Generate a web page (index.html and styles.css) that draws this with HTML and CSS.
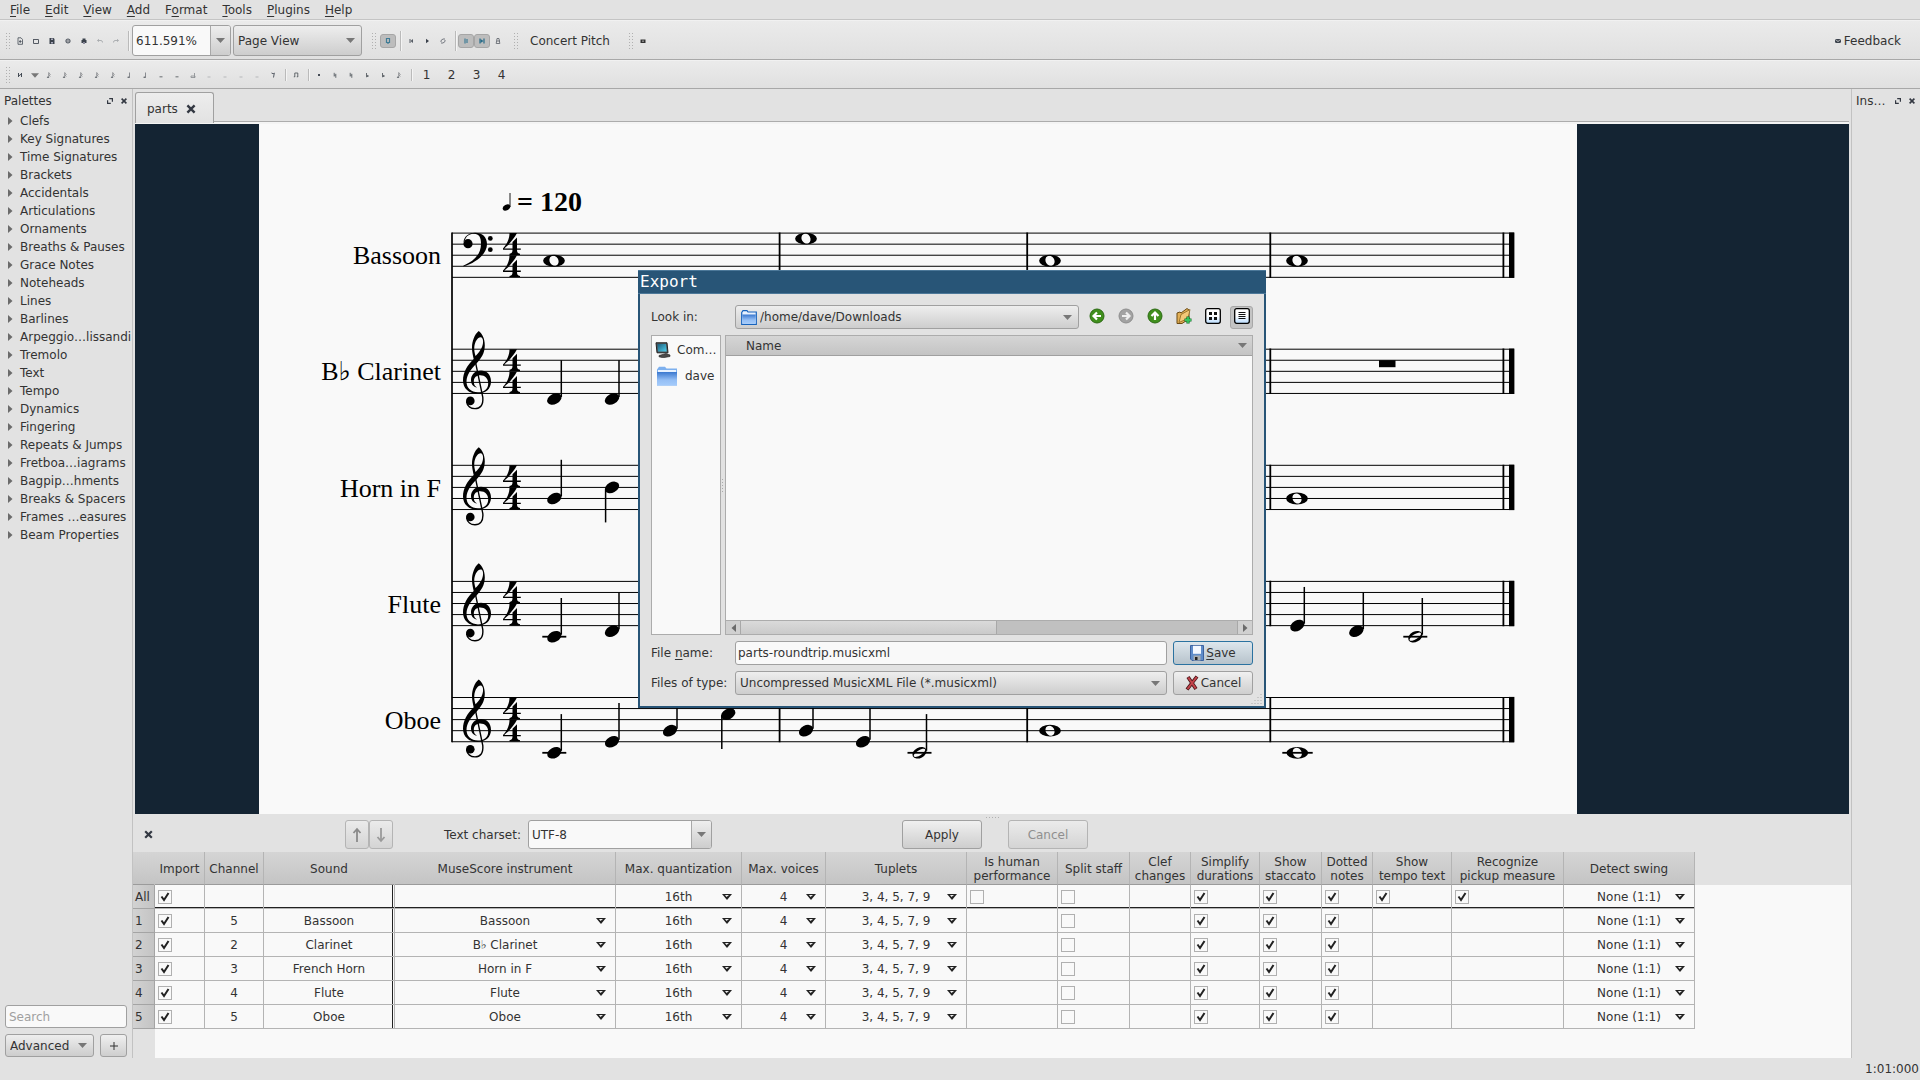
FILE: index.html
```html
<!DOCTYPE html>
<html lang="en">
<head>
<meta charset="utf-8">
<title>parts</title>
<link rel="stylesheet" href="styles.css">
</head>
<body>
<svg class="defs" aria-hidden="true">
  <defs>
    <symbol id="i-new" viewBox="0 0 8 8"><path d="M2 .8h3l1.5 1.7v4.8H2zM4.2 3v3M3 4.5h2.6" fill="none" stroke="#444b55" stroke-width=".8"/></symbol>
    <symbol id="i-open" viewBox="0 0 8 8"><path d="M1.5 2v4.5h5V2.5h-5" fill="none" stroke="#555b64"/></symbol>
    <symbol id="i-save" viewBox="0 0 8 8"><path d="M1.5 1h4l1 1v5h-5z" fill="#3b424c"/><path d="M3 1.5h2v1.5H3zM3 5h2v1.5H3z" fill="#aab"/></symbol>
    <symbol id="i-cloud" viewBox="0 0 8 8"><circle cx="4" cy="4" r="2" fill="none" stroke="#555b64" stroke-width="1.2"/><path d="M4 2.5V5" stroke="#555b64"/></symbol>
    <symbol id="i-print" viewBox="0 0 8 8"><path d="M2.5 1.5h3V3h1v3h-5V3h1z" fill="#3b424c"/><path d="M3 5h2v2H3z" fill="#889"/></symbol>
    <symbol id="i-undo" viewBox="0 0 8 8"><path d="M1.5 3.5h3.5q1.5 0 1.5 2M3 2.2 1.6 3.5 3 4.7" fill="none" stroke="#a5a8ac" stroke-width=".9"/></symbol>
    <symbol id="i-redo" viewBox="0 0 8 8"><path d="M6.5 3.5H3q-1.5 0-1.5 2M5 2.2 6.4 3.5 5 4.7" fill="none" stroke="#a5a8ac" stroke-width=".9"/></symbol>
    <symbol id="i-midi" viewBox="0 0 8 8"><path d="M2.5 1.500h3v4h-3zM4 5.500v1.500" fill="none" stroke="#3f7c96" stroke-width="1.200"/></symbol>
    <symbol id="i-rewind" viewBox="0 0 8 8"><path d="M2.500 2h1v4h-1zM6 2v4L3.500 4z" fill="#555b64"/></symbol>
    <symbol id="i-play" viewBox="0 0 8 8"><path d="M3 1.800 6 4 3 6.200z" fill="#3b424c"/></symbol>
    <symbol id="i-loop" viewBox="0 0 8 8"><path d="M2 5V3.500l2-1.500h2M6 3v1.500L4 6H2" fill="none" stroke="#666b74" stroke-width=".9"/></symbol>
    <symbol id="i-repeat" viewBox="0 0 8 8"><path d="M3 1.500v5M5 2v4" stroke="#3f7c96" stroke-width="1.200"/></symbol>
    <symbol id="i-pan" viewBox="0 0 8 8"><path d="M2 1.500v5M6 1.500v5" stroke="#276b88" stroke-width="1.200"/><path d="M2.500 2 5.500 4l-3 2z" fill="#276b88"/></symbol>
    <symbol id="i-metro" viewBox="0 0 8 8"><path d="M3 1.500h2l.8 5H2.200zM3 4h3" fill="none" stroke="#666b73" stroke-width=".9"/></symbol>
    <symbol id="i-camera" viewBox="0 0 8 8"><path d="M1.500 2.500h5v3.500h-5z" fill="#333"/><circle cx="4" cy="4.200" r=".9" fill="#999"/></symbol>
    <symbol id="i-mail" viewBox="0 0 8 8"><rect x="1" y="2" width="6" height="4" rx="1.500" fill="#3b424c"/><path d="m2.200 3.200 1.800 1.300 1.800-1.300" fill="none" stroke="#ddd" stroke-width=".8"/></symbol>
    <symbol id="i-input" viewBox="0 0 8 8"><path d="M2.500 6V2M5.500 6V2M2 5.500l4-3" stroke="#444b55" fill="none"/></symbol>
    <symbol id="i-flag" viewBox="0 0 8 8"><path d="M3.700 6.500v-5l1.800 2.500M3.700 3.500 5.300 5.500" fill="none" stroke="#85888c" stroke-width=".8"/><ellipse cx="3" cy="6.200" rx="1.200" ry=".8" fill="#666b70"/></symbol>
    <symbol id="i-quarter" viewBox="0 0 8 8"><path d="M4.500 6.500v-5" stroke="#888b90"/><ellipse cx="3.600" cy="6.200" rx="1.300" ry=".8" fill="#666b70"/></symbol>
    <symbol id="i-low" viewBox="0 0 8 8"><rect x="2.500" y="5" width="3" height="1.500" fill="#909396"/></symbol>
    <symbol id="i-long" viewBox="0 0 8 8"><path d="M2 5h4v1.500H2zM5.500 2v5" fill="none" stroke="#909396" stroke-width=".9"/></symbol>
    <symbol id="i-faint" viewBox="0 0 8 8"><rect x="2.500" y="5.500" width="3" height="1" fill="#b6b8ba"/></symbol>
    <symbol id="i-rest" viewBox="0 0 8 8"><path d="M2.500 2q2 1.500 2.800 0L4.500 6.500" fill="none" stroke="#555b64"/></symbol>
    <symbol id="i-tie" viewBox="0 0 8 8"><path d="M2.800 6V2h3M5.800 6V2M1.800 5.800h1M4.800 5.800h1" fill="none" stroke="#555b60" stroke-width=".9"/></symbol>
    <symbol id="i-dot" viewBox="0 0 8 8"><rect x="3" y="3" width="2" height="2" fill="#444b55"/></symbol>
    <symbol id="i-acc" viewBox="0 0 8 8"><path d="M3.200 1.800V5.500M4.800 2.800v4M3.200 4.200h1.600" fill="none" stroke="#666b70"/></symbol>
    <symbol id="i-flat" viewBox="0 0 8 8"><path d="M3.500 2v4L5.500 5 3.700 4" fill="none" stroke="#666b70"/></symbol>
    <symbol id="i-float" viewBox="0 0 10 10"><path d="M4 2h4v4M6 8H2V4" fill="none" stroke="#333842" stroke-width="1.500"/></symbol>
    <symbol id="i-x" viewBox="0 0 10 10"><path d="m2 2 6 6m0-6-6 6" stroke="#333842" stroke-width="2"/></symbol>
    <symbol id="i-down" viewBox="0 0 9 5"><path d="M0 0h9L4.500 5z" fill="#777"/></symbol>
    <symbol id="i-right" viewBox="0 0 5 8"><path d="M0 0v8l4.500-4z" fill="#6b6b6b"/></symbol>
    <symbol id="i-folder" viewBox="0 0 22 20">
      <path d="M1 3.500 3 .8h6l1.500 1.700H21v17H1z" fill="#7db0ee"/><path d="M2 4h18v2H2z" fill="#e8f2ff"/><path d="M1 6h20v13.500H1z" fill="url(#g-folder)"/>
    </symbol>
    <symbol id="i-folder-open" viewBox="0 0 16 15">
      <path d="M.7 2.500 2 .7h4l1 1.300h8.300v12.300H.7z" fill="#e8f2ff" stroke="#1763bd" stroke-width="1.200"/><path d="M1.300 4.500h13.400v9.200H1.300z" fill="url(#g-folder)"/>
    </symbol>
    <linearGradient id="g-folder" x2="0" y2="1"><stop offset="0" stop-color="#3a78cf"/><stop offset=".6" stop-color="#95bff5"/><stop offset="1" stop-color="#a4cbfb"/></linearGradient>
    <linearGradient id="g-screen" x2="1" y2="1"><stop offset="0" stop-color="#1d5d7a"/><stop offset="1" stop-color="#4fd0ee"/></linearGradient>
    <linearGradient id="g-page" x2="0" y2="1"><stop offset=".5" stop-color="#fff"/><stop offset="1" stop-color="#b9dcff"/></linearGradient>
    <g id="treble">
      <path fill-rule="evenodd" d="M15.700-51.300C11.500-48 9-41 9-35c0 5 1 8 1.700 11.500C4-17 0-10 0-2 0 6 6 11.200 14.500 11.200 22.500 11.200 28 6.500 28-1c0-7-4.500-10.800-10-10.800C12-11.800 8-7.500 8-2.500 8 2 10.500 4.500 14 5c-2.500-1.500-3.200-3.500-3.200-6 0-4 2.700-6.200 6.500-6.200C22-7.200 25.200-4 25.200 1c0 5.500-4.200 8.800-10.200 8.800C8 9.800 3.500 5.500 3.500-1c0-6.500 4.500-12.500 9.500-17.500C18-24 21.800-29 21.800-37c0-7-2.800-12-6.100-14.300zM18.500-45c1.500 1 1.700 3 1.500 5.500-.5 5-4 9.500-7.500 13-1-3.500-1.500-6.500-1.200-9C12-41 15-46 18.500-45z"/>
      <path d="M11.500-25l8.300 40C20.500 23 17 26.200 12 26.200 8 26.200 4 24 3.600 19" fill="none" stroke="#000" stroke-width="1.400"/>
      <circle cx="7.300" cy="18.500" r="4.300"/>
    </g>
    <g id="bass">
      <path d="M.5-2C1-8 6-11.400 12-11.400 19.500-11.400 24-7 24 0 24 9 14 18.500.3 22.300v-.8C11 17 18 10 18-.5 18-7 16-10.400 11-10.400 6.500-10.400 3-8 2-4z"/>
      <circle cx="5" cy="-.5" r="4.600"/><circle cx="27.300" cy="-5.700" r="2.400"/><circle cx="27.300" cy="5.500" r="2.400"/>
    </g>
    <path id="four" d="M6.500 0H14C11 6 5 12.500 1.300 15.300H9.500V9L14 4.500v10.800h3.800v1.300H14c0 2.400.5 3.700 3 4v1.200H6.500v-1.200c2.500-.3 3-1.600 3-4H0v-1.300C4 11 6.500 6 6.500 0z"/>
    <g id="time"><use href="#four"/><use href="#four" y="22.200"/></g>
    <g id="staff">
      <path d="M452 0H1514M452 11.060H1514M452 22.120H1514M452 33.180H1514M452 44.240H1514" stroke="#000"/>
      <path d="M779.600-.6V44.800M1027.200-.6V44.800M1270.300-.6V44.800M1503.400-.6V44.800" stroke="#000" stroke-width="1.800"/>
      <path d="M1509-.6h5.400V44.800H1509z"/><use href="#time" x="503"/>
    </g>
    <ellipse id="head" rx="7.600" ry="5.200" transform="rotate(-28)"/>
    <g id="up"><use href="#head"/><path d="M7-38.700V-2" stroke="#000" stroke-width="1.500"/></g>
    <g id="dn"><use href="#head"/><path d="M-6.400 2V35" stroke="#000" stroke-width="1.500"/></g>
    <path id="whole" fill-rule="evenodd" d="M-10.900 0a10.900 5.900 0 1 0 21.800 0a10.900 5.900 0 1 0-21.800 0zM2.600 4.500A5.200 4.200 60 1 0-2.600-4.500A5.200 4.200 60 1 0 2.600 4.500z"/>
    <g id="half"><path fill-rule="evenodd" d="M6.710-3.570A7.600 5.200-28 1 0-6.710 3.570A7.600 5.200-28 1 0 6.710-3.570zM5.600-3.500A6.600 2.500-32 1 1-5.600 3.500A6.600 2.500-32 1 1 5.600-3.500z"/><path d="M7-38.700V-2" stroke="#000" stroke-width="1.500"/></g>
    <path id="ledger" d="M-12 0h24" stroke="#000" stroke-width="1.800"/>
  </defs>
</svg>

<nav class="menubar">
  <button><u>F</u>ile</button><button><u>E</u>dit</button><button><u>V</u>iew</button><button><u>A</u>dd</button><button>F<u>o</u>rmat</button><button><u>T</u>ools</button><button><u>P</u>lugins</button><button><u>H</u>elp</button>
</nav>

<div class="toolbar main-tools">
  <span class="grip"></span>
  <button class="tool" aria-label="New"><svg><use href="#i-new"/></svg></button><button class="tool" aria-label="Open"><svg><use href="#i-open"/></svg></button><button class="tool" aria-label="Save score"><svg><use href="#i-save"/></svg></button><button class="tool" aria-label="Save online"><svg><use href="#i-cloud"/></svg></button><button class="tool" aria-label="Print"><svg><use href="#i-print"/></svg></button><button class="tool" aria-label="Undo"><svg><use href="#i-undo"/></svg></button><button class="tool" aria-label="Redo"><svg><use href="#i-redo"/></svg></button>
  <span class="sep"></span>
  <div class="combo zoom"><input value="611.591%" aria-label="Zoom"><button aria-label="Zoom list"><svg class="down"><use href="#i-down"/></svg></button></div>
  <select class="field view" aria-label="View mode"><option>Page View</option></select>
  <span class="grip second"></span>
  <button class="tool on" aria-label="MIDI input"><svg><use href="#i-midi"/></svg></button>
  <span class="sep"></span>
  <button class="tool" aria-label="Rewind"><svg><use href="#i-rewind"/></svg></button><button class="tool" aria-label="Play"><svg><use href="#i-play"/></svg></button><button class="tool" aria-label="Loop"><svg><use href="#i-loop"/></svg></button>
  <span class="sep"></span>
  <button class="tool on" aria-label="Play repeats"><svg><use href="#i-repeat"/></svg></button><button class="tool on" aria-label="Pan score"><svg><use href="#i-pan"/></svg></button><button class="tool" aria-label="Metronome"><svg><use href="#i-metro"/></svg></button>
  <span class="grip third"></span>
  <button class="pitch">Concert Pitch</button>
  <span class="grip"></span>
  <button class="tool" aria-label="Image capture"><svg><use href="#i-camera"/></svg></button>
  <button class="feedback"><svg><use href="#i-mail"/></svg>Feedback</button>
</div>

<div class="toolbar note-tools">
  <span class="grip"></span>
  <button class="tool" aria-label="Note input"><svg><use href="#i-input"/></svg></button><button class="tool narrow" aria-label="Input modes"><svg class="down"><use href="#i-down"/></svg></button><button class="tool" aria-label="128th"><svg><use href="#i-flag"/></svg></button><button class="tool" aria-label="64th"><svg><use href="#i-flag"/></svg></button><button class="tool" aria-label="32nd"><svg><use href="#i-flag"/></svg></button><button class="tool" aria-label="16th"><svg><use href="#i-flag"/></svg></button><button class="tool" aria-label="Eighth"><svg><use href="#i-flag"/></svg></button><button class="tool" aria-label="Quarter"><svg><use href="#i-quarter"/></svg></button><button class="tool" aria-label="Half"><svg><use href="#i-quarter"/></svg></button><button class="tool" aria-label="Whole"><svg><use href="#i-low"/></svg></button><button class="tool" aria-label="Double whole"><svg><use href="#i-low"/></svg></button><button class="tool" aria-label="Longa"><svg><use href="#i-long"/></svg></button><button class="tool" aria-label="Dot"><svg><use href="#i-faint"/></svg></button><button class="tool" aria-label="Double dot"><svg><use href="#i-faint"/></svg></button><button class="tool" aria-label="Triple dot"><svg><use href="#i-faint"/></svg></button><button class="tool" aria-label="Tie"><svg><use href="#i-faint"/></svg></button><button class="tool" aria-label="Rest"><svg><use href="#i-rest"/></svg></button>
  <span class="sep"></span>
  <button class="tool" aria-label="Flip"><svg><use href="#i-tie"/></svg></button>
  <span class="sep"></span>
  <button class="tool" aria-label="Accent"><svg><use href="#i-dot"/></svg></button><button class="tool" aria-label="Sharp"><svg><use href="#i-acc"/></svg></button><button class="tool" aria-label="Natural"><svg><use href="#i-acc"/></svg></button><button class="tool" aria-label="Flat"><svg><use href="#i-flat"/></svg></button><button class="tool" aria-label="Double flat"><svg><use href="#i-flat"/></svg></button><button class="tool" aria-label="Grace"><svg><use href="#i-flag"/></svg></button>
  <span class="sep"></span>
  <button class="voice">1</button><button class="voice">2</button><button class="voice">3</button><button class="voice">4</button>
</div>

<main class="workspace">
  <aside class="palettes">
    <header class="dock-title"><span>Palettes</span><button aria-label="Float"><svg><use href="#i-float"/></svg></button><button aria-label="Close"><svg><use href="#i-x"/></svg></button></header>
    <ul>
      <li><svg><use href="#i-right"/></svg>Clefs</li>
      <li><svg><use href="#i-right"/></svg>Key Signatures</li>
      <li><svg><use href="#i-right"/></svg>Time Signatures</li>
      <li><svg><use href="#i-right"/></svg>Brackets</li>
      <li><svg><use href="#i-right"/></svg>Accidentals</li>
      <li><svg><use href="#i-right"/></svg>Articulations</li>
      <li><svg><use href="#i-right"/></svg>Ornaments</li>
      <li><svg><use href="#i-right"/></svg>Breaths &amp; Pauses</li>
      <li><svg><use href="#i-right"/></svg>Grace Notes</li>
      <li><svg><use href="#i-right"/></svg>Noteheads</li>
      <li><svg><use href="#i-right"/></svg>Lines</li>
      <li><svg><use href="#i-right"/></svg>Barlines</li>
      <li><svg><use href="#i-right"/></svg>Arpeggio…lissandi</li>
      <li><svg><use href="#i-right"/></svg>Tremolo</li>
      <li><svg><use href="#i-right"/></svg>Text</li>
      <li><svg><use href="#i-right"/></svg>Tempo</li>
      <li><svg><use href="#i-right"/></svg>Dynamics</li>
      <li><svg><use href="#i-right"/></svg>Fingering</li>
      <li><svg><use href="#i-right"/></svg>Repeats &amp; Jumps</li>
      <li><svg><use href="#i-right"/></svg>Fretboa…iagrams</li>
      <li><svg><use href="#i-right"/></svg>Bagpip…hments</li>
      <li><svg><use href="#i-right"/></svg>Breaks &amp; Spacers</li>
      <li><svg><use href="#i-right"/></svg>Frames …easures</li>
      <li><svg><use href="#i-right"/></svg>Beam Properties</li>
    </ul>
    <div class="palette-foot">
      <input class="field" type="text" placeholder="Search" aria-label="Search palettes">
      <div class="foot-row"><select class="field" aria-label="Workspace"><option>Advanced</option></select><button class="btn" aria-label="Add workspace"><svg viewBox="0 0 10 10"><path d="M5 1v8M1 5h8" stroke="#333"/></svg></button></div>
    </div>
  </aside>

  <section class="center">
    <div class="tabs"><div class="tab"><span>parts</span><button aria-label="Close tab"><svg><use href="#i-x"/></svg></button></div></div>
    <div class="canvas">
      <svg class="score" viewBox="259 124 1318 690" preserveAspectRatio="xMinYMin slice">
        <rect x="259" y="124" width="1318" height="690" fill="#f9f9f9"/>
        <path d="M452 232.500V742.300" stroke="#000" stroke-width="1.700"/>
        <g class="label">
          <text x="441" y="264">Bassoon</text><text x="441" y="380">B<tspan class="flat">♭</tspan> Clarinet</text><text x="441" y="497">Horn in F</text><text x="441" y="613">Flute</text><text x="441" y="729">Oboe</text>
        </g>
        <ellipse cx="506.500" cy="207.500" rx="4" ry="2.700" transform="rotate(-28 506.500 207.500)"/><path d="M510 193v14" stroke="#000" stroke-width=".9"/>
        <text class="tempo" x="517" y="211">= 120</text>
        <g transform="translate(0 233.100)">
          <use href="#staff"/><use href="#bass" x="463" y="11.060"/>
          <use href="#whole" x="554" y="27.650"/><use href="#whole" x="806" y="5.530"/><use href="#whole" x="1050" y="27.650"/><use href="#whole" x="1297" y="27.650"/>
        </g>
        <g transform="translate(0 349.200)">
          <use href="#staff"/><use href="#treble" x="463" y="33.180"/>
          <use href="#up" x="554.300" y="49.770"/><use href="#up" x="612" y="49.770"/><path d="M1379 11h16.500v7H1379z"/>
        </g>
        <g transform="translate(0 465.300)">
          <use href="#staff"/><use href="#treble" x="463" y="33.180"/>
          <use href="#up" x="554.300" y="33.180"/><use href="#dn" x="612" y="22.120"/><use href="#whole" x="1297" y="33.180"/>
        </g>
        <g transform="translate(0 581.400)">
          <use href="#staff"/><use href="#treble" x="463" y="33.180"/>
          <use href="#up" x="554.300" y="55.300"/><use href="#ledger" x="554.300" y="55.300"/><use href="#up" x="612" y="49.770"/>
          <use href="#up" x="1297.300" y="44.240"/><use href="#up" x="1356.300" y="49.770"/><use href="#half" x="1415.300" y="55.300"/><use href="#ledger" x="1415.300" y="55.300"/>
        </g>
        <g transform="translate(0 697.500)">
          <use href="#staff"/><use href="#treble" x="463" y="33.180"/>
          <use href="#up" x="554.300" y="55.300"/><use href="#ledger" x="554.300" y="55.300"/><use href="#up" x="612" y="44.240"/><use href="#up" x="670" y="33.180"/><use href="#dn" x="728.200" y="16.590"/>
          <use href="#up" x="806" y="33.180"/><use href="#up" x="863" y="44.240"/><use href="#half" x="919.500" y="55.300"/><use href="#ledger" x="919.500" y="55.300"/>
          <use href="#whole" x="1050" y="33.180"/><use href="#whole" x="1297.300" y="55.300"/><path d="M1282.300 55.300h30.400" stroke="#000" stroke-width="1.800"/>
        </g>
      </svg>
    </div>

    <section class="import">
      <span class="handle"></span>
      <div class="import-tools">
        <button class="plain" aria-label="Close panel"><svg><use href="#i-x"/></svg></button>
        <div class="movers"><button class="btn" disabled aria-label="Move up"><svg viewBox="0 0 10 16"><path d="M5 15V2M1.500 6 5 2l3.500 4" fill="none" stroke="#8a8a8a" stroke-width="1.800"/></svg></button><button class="btn" disabled aria-label="Move down"><svg viewBox="0 0 10 16"><path d="M5 1v13M1.500 10 5 14l3.500-4" fill="none" stroke="#9a9a9a" stroke-width="1.800"/></svg></button></div>
        <label for="charset">Text charset:</label>
        <div class="combo charset"><input id="charset" value="UTF-8"><button aria-label="Charset list"><svg class="down"><use href="#i-down"/></svg></button></div>
        <button class="btn wide apply">Apply</button>
        <button class="btn wide" disabled>Cancel</button>
      </div>
      <div class="tracks">
        <table>
          <colgroup><col class="w22"><col class="w50"><col class="w59"><col class="w131"><col class="w221"><col class="w126"><col class="w84"><col class="w141"><col class="w91"><col class="w72"><col class="w61"><col class="w69"><col class="w62"><col class="w51"><col class="w79"><col class="w112"><col class="w131"></colgroup>
          <thead><tr><th></th><th>Import</th><th>Channel</th><th>Sound</th><th>MuseScore instrument</th><th>Max. quantization</th><th>Max. voices</th><th>Tuplets</th><th>Is human<br>performance</th><th>Split staff</th><th>Clef<br>changes</th><th>Simplify<br>durations</th><th>Show<br>staccato</th><th>Dotted<br>notes</th><th>Show<br>tempo text</th><th>Recognize<br>pickup measure</th><th>Detect swing</th></tr></thead>
          <tbody>
            <tr class="all"><th>All</th><td><input type="checkbox" checked aria-label="Import all"></td><td></td><td class="sound"></td><td></td><td><select aria-label="Max. quantization"><option>16th</option></select></td><td><select aria-label="Max. voices"><option>4</option></select></td><td><select aria-label="Tuplets"><option>3, 4, 5, 7, 9</option></select></td><td><input type="checkbox" aria-label="Is human performance"></td><td><input type="checkbox" aria-label="Split staff"></td><td></td><td><input type="checkbox" checked aria-label="Simplify durations"></td><td><input type="checkbox" checked aria-label="Show staccato"></td><td><input type="checkbox" checked aria-label="Dotted notes"></td><td><input type="checkbox" checked aria-label="Show tempo text"></td><td><input type="checkbox" checked aria-label="Recognize pickup measure"></td><td><select aria-label="Detect swing"><option>None (1:1)</option></select></td></tr>
            <tr><th>1</th><td><input type="checkbox" checked aria-label="Import"></td><td>5</td><td class="sound">Bassoon</td><td><select aria-label="Instrument"><option>Bassoon</option></select></td><td><select aria-label="Max. quantization"><option>16th</option></select></td><td><select aria-label="Max. voices"><option>4</option></select></td><td><select aria-label="Tuplets"><option>3, 4, 5, 7, 9</option></select></td><td></td><td><input type="checkbox" aria-label="Split staff"></td><td></td><td><input type="checkbox" checked aria-label="Simplify durations"></td><td><input type="checkbox" checked aria-label="Show staccato"></td><td><input type="checkbox" checked aria-label="Dotted notes"></td><td></td><td></td><td><select aria-label="Detect swing"><option>None (1:1)</option></select></td></tr>
            <tr><th>2</th><td><input type="checkbox" checked aria-label="Import"></td><td>2</td><td class="sound">Clarinet</td><td><select aria-label="Instrument"><option>B♭ Clarinet</option></select></td><td><select aria-label="Max. quantization"><option>16th</option></select></td><td><select aria-label="Max. voices"><option>4</option></select></td><td><select aria-label="Tuplets"><option>3, 4, 5, 7, 9</option></select></td><td></td><td><input type="checkbox" aria-label="Split staff"></td><td></td><td><input type="checkbox" checked aria-label="Simplify durations"></td><td><input type="checkbox" checked aria-label="Show staccato"></td><td><input type="checkbox" checked aria-label="Dotted notes"></td><td></td><td></td><td><select aria-label="Detect swing"><option>None (1:1)</option></select></td></tr>
            <tr><th>3</th><td><input type="checkbox" checked aria-label="Import"></td><td>3</td><td class="sound">French Horn</td><td><select aria-label="Instrument"><option>Horn in F</option></select></td><td><select aria-label="Max. quantization"><option>16th</option></select></td><td><select aria-label="Max. voices"><option>4</option></select></td><td><select aria-label="Tuplets"><option>3, 4, 5, 7, 9</option></select></td><td></td><td><input type="checkbox" aria-label="Split staff"></td><td></td><td><input type="checkbox" checked aria-label="Simplify durations"></td><td><input type="checkbox" checked aria-label="Show staccato"></td><td><input type="checkbox" checked aria-label="Dotted notes"></td><td></td><td></td><td><select aria-label="Detect swing"><option>None (1:1)</option></select></td></tr>
            <tr><th>4</th><td><input type="checkbox" checked aria-label="Import"></td><td>4</td><td class="sound">Flute</td><td><select aria-label="Instrument"><option>Flute</option></select></td><td><select aria-label="Max. quantization"><option>16th</option></select></td><td><select aria-label="Max. voices"><option>4</option></select></td><td><select aria-label="Tuplets"><option>3, 4, 5, 7, 9</option></select></td><td></td><td><input type="checkbox" aria-label="Split staff"></td><td></td><td><input type="checkbox" checked aria-label="Simplify durations"></td><td><input type="checkbox" checked aria-label="Show staccato"></td><td><input type="checkbox" checked aria-label="Dotted notes"></td><td></td><td></td><td><select aria-label="Detect swing"><option>None (1:1)</option></select></td></tr>
            <tr><th>5</th><td><input type="checkbox" checked aria-label="Import"></td><td>5</td><td class="sound">Oboe</td><td><select aria-label="Instrument"><option>Oboe</option></select></td><td><select aria-label="Max. quantization"><option>16th</option></select></td><td><select aria-label="Max. voices"><option>4</option></select></td><td><select aria-label="Tuplets"><option>3, 4, 5, 7, 9</option></select></td><td></td><td><input type="checkbox" aria-label="Split staff"></td><td></td><td><input type="checkbox" checked aria-label="Simplify durations"></td><td><input type="checkbox" checked aria-label="Show staccato"></td><td><input type="checkbox" checked aria-label="Dotted notes"></td><td></td><td></td><td><select aria-label="Detect swing"><option>None (1:1)</option></select></td></tr>
          </tbody>
        </table>
      </div>
    </section>
  </section>

  <aside class="inspector">
    <header class="dock-title"><span>Ins…</span><button aria-label="Float"><svg><use href="#i-float"/></svg></button><button aria-label="Close"><svg><use href="#i-x"/></svg></button></header>
  </aside>
</main>

<footer class="status">1:01:000</footer>

<div class="dialog" role="dialog" aria-label="Export">
  <div class="titlebar">Export</div>
  <form class="dialog-body">
    <div class="row">
      <label for="look">Look in:</label>
      <div class="lookin"><svg><use href="#i-folder-open"/></svg><select class="field" id="look"><option>/home/dave/Downloads</option></select></div>
      <button type="button" class="nav" aria-label="Back"><svg viewBox="0 0 16 16"><circle cx="8" cy="8" r="7" fill="#3f8f1c" stroke="#2b6a12"/><path d="M12 8H5M8 4.500 4.500 8 8 11.500" fill="none" stroke="#fff" stroke-width="2.200"/></svg></button>
      <button type="button" class="nav" aria-label="Forward"><svg viewBox="0 0 16 16"><circle cx="8" cy="8" r="7" fill="#a2a2a2" stroke="#8e8e8e"/><path d="M4 8h7M8 4.500 11.500 8 8 11.500" fill="none" stroke="#eee" stroke-width="2.200"/></svg></button>
      <button type="button" class="nav" aria-label="Parent folder"><svg viewBox="0 0 16 16"><circle cx="8" cy="8" r="7" fill="#3f8f1c" stroke="#2b6a12"/><path d="M8 12V5M4.500 8 8 4.500 11.500 8" fill="none" stroke="#fff" stroke-width="2.200"/></svg></button>
      <button type="button" class="nav" aria-label="New folder"><svg viewBox="0 0 16 16"><path d="m1 5 3-1 1 1 6-4.500 2 1.500v9l-7 4.500H1z" fill="#e3b057" stroke="#6b4a14"/><path d="m3 14.500 2-8 9-5-2 9z" fill="#f3c878" stroke="#8a6420" stroke-width=".8"/><path d="M12 8.500v7M8.500 12h7" stroke="#156b2a" stroke-width="3.200"/><path d="M12 9v6M9 12h6" stroke="#35c55c" stroke-width="1.800"/></svg></button>
      <button type="button" class="nav" aria-label="Icon view"><svg viewBox="0 0 16 16"><rect x=".7" y=".7" width="14.600" height="14.600" rx="2" fill="url(#g-page)" stroke="#000" stroke-width="1.300"/><path d="M4 4h3v3H4zM9 4h3v3H9zM4 9h3v3H4zM9 9h3v3H9z" fill="#111"/></svg></button>
      <button type="button" class="nav on" aria-label="Detail view"><svg viewBox="0 0 16 16"><rect x=".7" y=".7" width="14.600" height="14.600" rx="2" fill="url(#g-page)" stroke="#000" stroke-width="1.300"/><path d="M4.500 4.500h7M4.500 6.500h7M4.500 8.500h7M4.500 10.500h7" stroke="#111"/></svg></button>
    </div>
    <div class="panes">
      <ul class="places">
        <li class="computer"><svg viewBox="0 0 16 16"><path d="M1 .8h11l1 10H2z" fill="#50565a" stroke="#222"/><path d="M2.500 2h8.500l.7 7.500H3z" fill="url(#g-screen)"/><path d="M4 13.500 11 11.500l4 1.500v1.500l-7 1.300-4-1z" fill="#4a4a4a" stroke="#222" stroke-width=".6"/></svg>Com…</li>
        <li class="home"><svg><use href="#i-folder"/></svg>dave</li>
      </ul>
      <div class="splitter"></div>
      <div class="files">
        <div class="files-head"><span>Name</span><svg class="down"><use href="#i-down"/></svg></div>
        <div class="files-list"></div>
        <div class="scroll"><button type="button" aria-label="Scroll left"><svg class="back"><use href="#i-right"/></svg></button><div class="track"><div class="thumb"></div></div><button type="button" aria-label="Scroll right"><svg><use href="#i-right"/></svg></button></div>
      </div>
    </div>
    <div class="row">
      <label for="fname">File <u>n</u>ame:</label>
      <input class="field grow" id="fname" type="text" value="parts-roundtrip.musicxml">
      <button type="button" class="btn dlg save"><svg viewBox="0 0 14 16"><path d="M.5.500h13v15H2L.5 14z" fill="#5f8cc9" stroke="#3c62a0"/><path d="M3 .8h8v8H3z" fill="#f4f8ff"/><path d="M3.500 10.500h7v5h-7z" fill="#a8acaf"/><path d="M5 12h2.500v3H5z" fill="#222"/></svg><span><u>S</u>ave</span></button>
    </div>
    <div class="row">
      <label for="ftype">Files of type:</label>
      <select class="field grow" id="ftype"><option>Uncompressed MusicXML File (*.musicxml)</option></select>
      <button type="button" class="btn dlg"><svg viewBox="0 0 14 16"><path d="m3 2 8 12M12 1.500 2 14.500" stroke="#4a1518" stroke-width="3.600"/><path d="m3.300 2.500 7.400 11M11.700 2 2.500 14" stroke="#c4444b" stroke-width="2"/></svg><span>Cancel</span></button>
    </div>
  </form>
  <svg class="resize" viewBox="0 0 12 12"><path d="M10 1v1M7 4v1M10 4v1M4 7v1M7 7v1M10 7v1M1 10v1M4 10v1M7 10v1M10 10v1" stroke="#aaa"/></svg>
</div>
</body>
</html>
```
FILE: styles.css
```css
* { box-sizing: border-box; }
body {
  margin: 0; min-height: 100vh; display: flex; flex-direction: column; overflow: hidden;
  background: #e2e2e2; color: #333; font: 12px/14px "DejaVu Sans", sans-serif;
}
button, input, select { font: inherit; color: inherit; margin: 0; }
button { background: none; border: 0; padding: 0; }
button svg, li svg { flex: none; }
u { text-underline-offset: 2px; }
ul { list-style: none; margin: 0; padding: 0; }
.defs { position: absolute; width: 0; height: 0; }
.down { width: 9px; height: 5px; }

.menubar { height: 20px; display: flex; gap: 15px; padding: 0 10px; align-items: center; border-bottom: 1px solid #c4c4c4; }
.menubar button { height: 16px; }

.toolbar { display: flex; align-items: center; padding: 2px 0 0 5px; background: linear-gradient(#ebebeb, #e0e0e0); border-bottom: 1px solid #a8a8a8; box-shadow: inset 0 1px #f1f1f1; }
.main-tools { height: 40px; }
.note-tools { height: 29px; }
.grip { width: 5px; height: 18px; margin-right: 2px; flex: none; background: radial-gradient(circle, #b0b0b0 1px, transparent 1px) 0 0 / 3px 3px; }
.grip.second { margin-left: 9px; margin-right: 4px; }
.grip.third { margin-left: 7px; margin-right: 12px; }
.tool { width: 16px; height: 14px; display: grid; place-items: center; flex: none; }
.tool svg { width: 8px; height: 8px; }
.tool svg.down { width: 8px; height: 5px; }
.tool.narrow { width: 13px; }
.tool.on { background: #bdbdbd; border: 1px solid #a6a6a6; border-radius: 3px; }
.sep { width: 1px; height: 20px; background: #bababa; margin: 0 2px 0 4px; box-shadow: 1px 0 #f4f4f4; flex: none; }
.note-tools .sep { height: 12px; }
.voice { width: 25px; }
.pitch { margin-right: 18px; }
.feedback { margin-left: auto; margin-right: 19px; display: flex; align-items: center; gap: 2px; }
.feedback svg { width: 8px; height: 8px; }

.field, .combo, .btn { border: 1px solid #a0a0a0; border-radius: 3px; }
input.field, .combo { background: #f9f9f9; }
input { outline: 0; }
input::placeholder { color: #a0a0a0; opacity: 1; }
select { appearance: none; outline: 0; border-radius: 0; opacity: 1; }
select.field {
  padding: 0 18px 0 4px; border-radius: 3px;
  background: url("data:image/svg+xml,%3Csvg xmlns='http://www.w3.org/2000/svg' width='9' height='5'%3E%3Cpath d='M0 0h9L4.500 5z' fill='%23777'/%3E%3C/svg%3E") no-repeat right 6px center, linear-gradient(#eee, #cdcdcd);
}
.btn { background: linear-gradient(#f0f0f0, #cecece); display: flex; align-items: center; justify-content: center; }
.btn:disabled { border-color: #b4b4b4; color: #8f8f8f; background: linear-gradient(#ebebeb, #d4d4d4); }
.combo { display: flex; overflow: hidden; }
.combo input { flex: 1; min-width: 0; border: 0; background: none; padding: 0 3px; }
.combo button { width: 20px; border-left: 1px solid #a8a8a8; background: linear-gradient(#eee, #cdcdcd); display: grid; place-items: center; }
.zoom { width: 99px; height: 31px; margin: 0 2px 0 1px; }
.view.field { width: 129px; height: 31px; }

.workspace { flex: 1; display: grid; grid-template-columns: 133px 1fr 69px; }
.palettes { border-right: 1px solid #c2c2c2; display: flex; flex-direction: column; }
.dock-title { height: 23px; display: flex; align-items: center; gap: 6px; padding: 1px 4px 0; }
.dock-title span { flex: 1; }
.dock-title svg { width: 8px; height: 8px; display: block; }
.palettes li { height: 18px; display: flex; align-items: center; gap: 7px; padding-left: 8px; white-space: nowrap; overflow: hidden; }
.palettes li svg { width: 5px; height: 8px; }
.palette-foot { margin-top: auto; padding: 0 5px 1px; display: flex; flex-direction: column; gap: 6px; }
.palette-foot .field, .palette-foot .btn { height: 23px; }
.palette-foot input { width: 100%; padding: 0 3px; }
.foot-row { display: flex; gap: 6px; }
.foot-row select { flex: 1; min-width: 0; }
.foot-row .btn { width: 27px; }
.foot-row svg { width: 10px; height: 10px; }
.inspector { border-left: 1px solid #c2c2c2; }

.center { display: flex; flex-direction: column; min-width: 0; }
.tabs { height: 35px; margin: 0 2px; padding-top: 3px; border-bottom: 2px solid #f4f4f4; box-shadow: inset 0 -1px #acacac; }
.tab { width: 79px; height: 31px; display: flex; align-items: center; padding: 2px 0 0 11px; gap: 7px; background: linear-gradient(#ededed, #e2e2e2); border: 1px solid #a0a0a0; border-bottom: 0; border-radius: 3px 3px 0 0; }
.tab svg { width: 12px; height: 12px; display: block; }
.canvas { flex: 1; margin: 0 2px; background: #142433; padding-left: 124px; display: flex; }
.score { width: 1318px; height: auto; min-height: 690px; flex: none; }
.label text { font: 26px "Liberation Serif", serif; text-anchor: end; }
.tempo { font: bold 28px "Liberation Serif", serif; }
.flat { font-family: "DejaVu Serif", "DejaVu Sans", serif; }

.import { display: flex; flex-direction: column; }
.handle { width: 15px; height: 3px; margin: 2px auto -5px; background: radial-gradient(circle, #b0b0b0 1px, transparent 1px) 0 0 / 3px 3px; }
.import-tools { display: flex; align-items: center; padding: 6px 10px 3px; }
.plain svg { width: 11px; height: 11px; display: block; }
.movers { display: flex; margin: 0 51px 0 191px; }
.movers .btn { width: 24px; height: 29px; }
.movers svg { width: 10px; height: 16px; }
.charset { width: 184px; height: 29px; margin: 0 190px 0 7px; }
.wide { width: 80px; height: 29px; }
.apply { margin-right: 26px; }

.tracks { background: linear-gradient(#e2e2e2, #e2e2e2) 0 0 / 100% 33px no-repeat, linear-gradient(#e2e2e2, #e2e2e2) 0 0 / 22px 100% no-repeat, #f9f9f9; padding-bottom: 29px; }
table { table-layout: fixed; width: 1562px; border-collapse: separate; border-spacing: 0; }
.w22 { width: 22px; } .w50 { width: 50px; } .w51 { width: 51px; } .w59 { width: 59px; } .w61 { width: 61px; } .w62 { width: 62px; }
.w69 { width: 69px; } .w72 { width: 72px; } .w79 { width: 79px; } .w84 { width: 84px; } .w91 { width: 91px; } .w112 { width: 112px; }
.w126 { width: 126px; } .w131 { width: 131px; } .w141 { width: 141px; } .w221 { width: 221px; }
th, td { padding: 0; font-weight: normal; text-align: center; border: solid #b4b4b4; border-width: 0 1px 1px 0; white-space: nowrap; }
thead th { height: 33px; padding-top: 2px; background: linear-gradient(#d5d5d5, #c4c4c4); border-bottom-color: #9b9b9b; }
thead th:first-child, thead th:nth-child(4) { border-right-color: transparent; }
tbody th { height: 24px; text-align: left; padding-left: 2px; background: linear-gradient(90deg, #d2d2d2, #c4c4c4); border-color: #a4a4a4; }
td { height: 24px; }
.all td { box-shadow: inset 0 -1px #222; }
.sound { background: linear-gradient(#222, #222) right 1px top 0 / 1px 100% no-repeat; }
td select {
  display: block; width: 100%; height: 22px; padding: 0; border: 0; text-align: center; text-align-last: center;
  background: url("data:image/svg+xml,%3Csvg xmlns='http://www.w3.org/2000/svg' width='10' height='6'%3E%3Cpath d='M0 0h10L5 6z' fill='%23222'/%3E%3Cpath d='M3 1h4L4.500 3z' fill='%23eee'/%3E%3C/svg%3E") no-repeat right 9px center;
}
input[type="checkbox"] { appearance: none; display: block; width: 14px; height: 14px; margin: 0 0 0 3px; border: 1px solid #b0b0b0; background: #f9f9f9; }
input[type="checkbox"]:checked { background: url("data:image/svg+xml,%3Csvg xmlns='http://www.w3.org/2000/svg' width='12' height='12'%3E%3Cpath d='M2.500 5.500 5 9 9.500 2' fill='none' stroke='%23222' stroke-width='2'/%3E%3C/svg%3E") center no-repeat; }

.status { height: 22px; display: flex; align-items: center; justify-content: flex-end; padding-right: 1px; }

.dialog { position: absolute; left: 638px; top: 270px; width: 628px; background: #e2e2e2; border: 2px solid #285577; border-top: 0; }
.titlebar { height: 24px; margin: 0 -2px; padding-left: 2px; background: #285577; border: solid #4c7899; border-width: 1px 0; color: #fff; font: 16px/22px "DejaVu Sans Mono", monospace; }
.dialog-body { padding: 11px; display: flex; flex-direction: column; gap: 6px; }
.row { display: flex; align-items: center; gap: 6px; }
.row label { width: 78px; white-space: nowrap; }
.row .field { height: 24px; }
.grow { flex: 1; min-width: 0; }
input.grow { padding: 0 2px; }
.lookin { flex: 1; display: grid; align-items: center; }
.lookin > * { grid-area: 1 / 1; }
.lookin svg { width: 16px; height: 15px; margin-left: 6px; z-index: 1; pointer-events: none; }
.lookin .field { width: 100%; padding-left: 24px; }
.nav { width: 23px; height: 23px; padding-bottom: 2px; display: grid; place-items: center; }
.nav svg { width: 16px; height: 16px; }
.nav.on { background: #c4c4c4; border: 1px solid #a8a8a8; border-radius: 3px; }
.dlg { width: 80px; height: 24px; gap: 2px; }
.dlg svg { width: 14px; height: 16px; }
.save { border-color: #2b72a0; background: linear-gradient(#dde6ec, #b7c3cb); }
.panes { height: 300px; display: flex; }
.places { width: 70px; border: 1px solid #acacac; background: #f9f9f9; padding: 4px 3px; }
.places li { display: flex; align-items: center; }
.computer { height: 20px; gap: 6px; }
.computer svg { width: 16px; height: 16px; }
.home { height: 32px; gap: 7px; padding-left: 1px; }
.home svg { width: 22px; height: 20px; }
.splitter { width: 4px; display: flex; align-items: center; }
.splitter::before { content: ""; width: 3px; height: 15px; background: radial-gradient(circle, #aaa 1px, transparent 1px) 0 0 / 3px 3px; }
.files { flex: 1; display: flex; flex-direction: column; border: 1px solid #acacac; background: #f9f9f9; }
.files-head { height: 20px; display: flex; align-items: center; justify-content: space-between; padding: 0 5px 0 20px; background: linear-gradient(#d5d5d5, #c4c4c4); border-bottom: 1px solid #a0a0a0; }
.files-list { flex: 1; }
.scroll { height: 14px; display: flex; border-top: 1px solid #acacac; background: #c0c0c0; }
.scroll button { width: 14px; background: #d0d0d0; display: grid; place-items: center; }
.scroll svg { width: 5px; height: 8px; }
.scroll .back { transform: rotate(180deg); }
.track { flex: 1; display: flex; border: solid #a8a8a8; border-width: 0 1px; }
.thumb { width: 256px; background: linear-gradient(#dadada, #cacaca); border-right: 1px solid #a8a8a8; }
.resize { position: absolute; right: 1px; bottom: 1px; width: 12px; height: 12px; }
```
